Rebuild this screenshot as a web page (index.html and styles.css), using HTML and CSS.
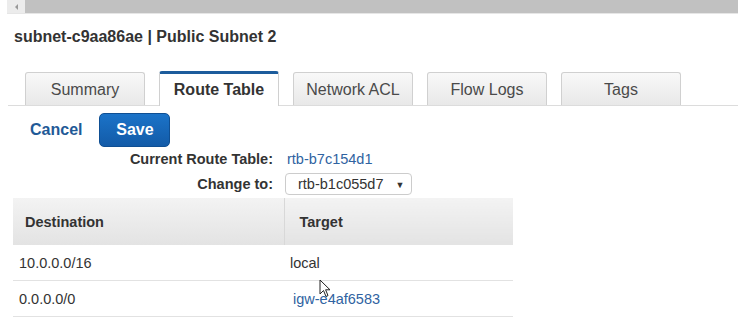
FILE: index.html
```html
<!DOCTYPE html>
<html lang="en">
<head>
    <meta charset="UTF-8">
    <title>subnet-c9aa86ae | Public Subnet 2</title>
    <link rel="stylesheet" href="styles.css">
</head>
<body>
    <div class="scrollbar">
        <div class="scroll-btn"><span class="scroll-arrow"></span></div>
    </div>

    <h1 class="title">subnet-c9aa86ae | Public Subnet 2</h1>

    <div class="tabs">
        <div class="tab">Summary</div>
        <div class="tab active">Route Table</div>
        <div class="tab">Network ACL</div>
        <div class="tab">Flow Logs</div>
        <div class="tab">Tags</div>
    </div>

    <div class="actions">
        <a class="cancel" href="#">Cancel</a>
        <button class="save">Save</button>
    </div>

    <div class="form">
        <div class="form-label">Current Route Table:</div>
        <a class="link" href="#">rtb-b7c154d1</a>
        <div class="form-label">Change to:</div>
        <div class="select">rtb-b1c055d7 <span class="caret">&#9660;</span></div>
    </div>

    <div class="routes">
        <table>
            <colgroup>
                <col class="col-dest">
                <col>
            </colgroup>
            <thead>
                <tr>
                    <th class="first">Destination</th>
                    <th>Target</th>
                </tr>
            </thead>
            <tbody>
                <tr>
                    <td>10.0.0.0/16</td>
                    <td>local</td>
                </tr>
                <tr>
                    <td>0.0.0.0/0</td>
                    <td><a class="link igw" href="#">igw-e4af6583</a></td>
                </tr>
            </tbody>
        </table>
        <svg class="cursor" width="12" height="19" viewBox="0 0 12 19">
            <path d="M1 1 L1 15 L4.5 11.5 L7 17.5 L9 16.6 L6.6 10.8 L11 10.8 Z" fill="#fff" stroke="#222" stroke-width="1" stroke-linejoin="round"/>
        </svg>
    </div>
</body>
</html>
```

FILE: styles.css
```css
body {
    font-family: "Liberation Sans", Arial, sans-serif;
    background-color: #fff;
    color: #333;
    margin: 0;
}
.scrollbar {
    margin-left: 7px;
    height: 13px;
    background-color: #c1c1c1;
    border-bottom: 1px solid #e6e6e6;
    display: flex;
}
.scroll-btn {
    width: 18px;
    background-color: #ececec;
    display: flex;
    align-items: center;
    justify-content: center;
}
.scroll-arrow {
    width: 0;
    height: 0;
    border-top: 3px solid transparent;
    border-bottom: 3px solid transparent;
    border-right: 3px solid #999;
}
.title {
    font-size: 16px;
    font-weight: bold;
    line-height: 20px;
    margin: 13px 0 0 14px;
    color: #333;
}
.tabs {
    display: flex;
    gap: 14px;
    margin: 24px 0 0 8px;
    padding-left: 17px;
    border-bottom: 1px solid #dcdcdc;
    align-items: flex-end;
}
.tab {
    width: 120px;
    height: 33px;
    box-sizing: border-box;
    border: 1px solid #d0d0d0;
    border-bottom: none;
    border-radius: 3px 3px 0 0;
    background: linear-gradient(#f8f8f8, #e8e8e8);
    font-size: 16px;
    color: #4a4a4a;
    text-align: center;
    line-height: 33px;
}
.tab.active {
    height: 35px;
    margin-bottom: -1px;
    border-top: 3px solid #1c5c9c;
    background: #fff;
    font-weight: bold;
    color: #333;
    line-height: 31px;
}
.actions {
    display: flex;
    align-items: center;
    gap: 17px;
    margin: 7px 0 0 30px;
}
.cancel {
    font-size: 16px;
    font-weight: bold;
    color: #1f5a97;
    text-decoration: none;
}
.save {
    width: 71px;
    height: 34px;
    background: linear-gradient(#1b73c8, #135ba8);
    border: 1px solid #0f4f93;
    border-radius: 5px;
    color: #fff;
    font-family: inherit;
    font-size: 16px;
    font-weight: bold;
    padding: 0;
}
.form {
    display: grid;
    grid-template-columns: 273px auto;
    column-gap: 14px;
    row-gap: 5px;
    align-items: center;
    justify-items: start;
    margin-top: 3px;
    font-size: 14.5px;
}
.form-label {
    justify-self: end;
    font-weight: bold;
    line-height: 18px;
}
.link {
    color: #2f63a1;
    text-decoration: none;
}
.select {
    margin-left: -2px;
    width: 127px;
    height: 22px;
    box-sizing: border-box;
    border: 1px solid #ccc;
    border-radius: 4px;
    padding-left: 12px;
    line-height: 20px;
    color: #333;
}
.caret {
    font-size: 9px;
    margin-left: 8px;
    vertical-align: 1px;
}
.routes {
    position: relative;
    margin: 3px 0 0 13px;
    width: 500px;
}
table {
    width: 100%;
    table-layout: fixed;
    border-collapse: collapse;
    font-size: 14.5px;
}
.col-dest {
    width: 271px;
}
th {
    height: 47px;
    text-align: left;
    font-weight: bold;
    background: linear-gradient(#f3f3f3, #e3e3e3);
    padding: 0 0 0 15px;
    border-left: 1px solid #d8d8d8;
}
th.first {
    padding-left: 12px;
    border-left: none;
}
td {
    height: 35px;
    padding: 0 0 0 6px;
    border-bottom: 1px solid #e2e2e2;
    color: #333;
}
.igw {
    margin-left: 3px;
}
.cursor {
    position: absolute;
    left: 306px;
    top: 81px;
}
```
